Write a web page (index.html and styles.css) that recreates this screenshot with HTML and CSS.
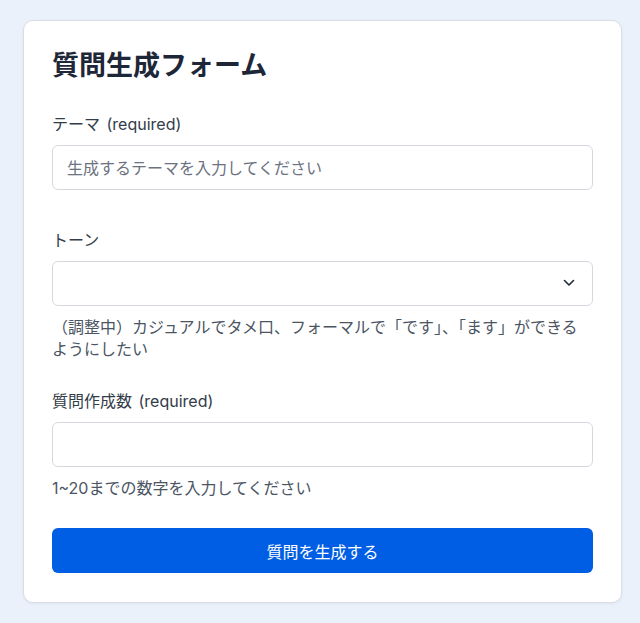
FILE: index.html
```html
<!DOCTYPE html>
<html lang="ja">
<head>
<meta charset="utf-8">
<title>質問生成フォーム</title>
<link rel="stylesheet" href="styles.css">
</head>
<body>
<div class="page">
  <div class="card">
    <h1 class="title">質問生成フォーム</h1>
    <form class="form">
      <div class="field field--plain">
        <label class="label" for="theme">テーマ&nbsp;(required)</label>
        <input class="control" id="theme" type="text" placeholder="生成するテーマを入力してください">
      </div>
      <div class="field">
        <label class="label" for="tone">トーン</label>
        <div class="select-wrap">
          <select class="control select" id="tone"><option></option></select>
          <svg class="chevron" width="12" height="8" viewBox="0 0 12 8" aria-hidden="true"><path d="M1.5 1.5 L6 6 L10.5 1.5" fill="none" stroke="#1f2937" stroke-width="1.6" stroke-linecap="round" stroke-linejoin="round"/></svg>
        </div>
        <p class="help">（調整中）カジュアルでタメ口、フォーマルで「です」、「ます」ができるようにしたい</p>
      </div>
      <div class="field">
        <label class="label" for="count">質問作成数&nbsp;(required)</label>
        <input class="control" id="count" type="text">
        <p class="help">1~20までの数字を入力してください</p>
      </div>
      <button class="submit" type="button">質問を生成する</button>
    </form>
  </div>
</div>
</body>
</html>
```

FILE: styles.css
```css
* { box-sizing: border-box; }
html, body { margin: 0; padding: 0; }
body {
  background: #ebf1fb;
  font-family: Inter, "Noto Sans CJK JP", sans-serif;
  color: #1f2937;
}
.page {
  padding: 20px 18px 20px 23px;
}
.card {
  background: #ffffff;
  border: 1px solid #d9dde4;
  border-radius: 10px;
  padding: 28px 28px 29px;
  box-shadow: 0 1px 3px rgba(30, 41, 59, 0.06);
}
.title {
  margin: 0 0 29px;
  font-size: 27px;
  line-height: 34px;
  font-weight: 700;
  color: #1e2737;
}
.form {
  display: flex;
  flex-direction: column;
  gap: 29px;
}
.field { display: flex; flex-direction: column; }
.field--plain { padding-bottom: 9px; }
.label {
  font-size: 16px;
  line-height: 24px;
  color: #333c49;
  margin-bottom: 9px;
  word-spacing: 2px;
}
.control {
  width: 100%;
  height: 45px;
  border: 1px solid #d5d9df;
  border-radius: 6px;
  padding: 0 14px;
  font-family: inherit;
  font-size: 16px;
  color: #1f2937;
  background: #ffffff;
  outline: none;
}
.control::placeholder { color: #6b7280; }
.select-wrap { position: relative; }
.select {
  appearance: none;
  -webkit-appearance: none;
}
.chevron {
  position: absolute;
  right: 18px;
  top: 18px;
  pointer-events: none;
}
.help {
  margin: 10px 0 0;
  font-size: 16px;
  line-height: 22px;
  color: #4b5563;
}
.submit {
  height: 45px;
  width: 100%;
  border: none;
  border-radius: 6px;
  background: #005ee4;
  color: #ffffff;
  font-family: inherit;
  font-size: 16px;
}
```
